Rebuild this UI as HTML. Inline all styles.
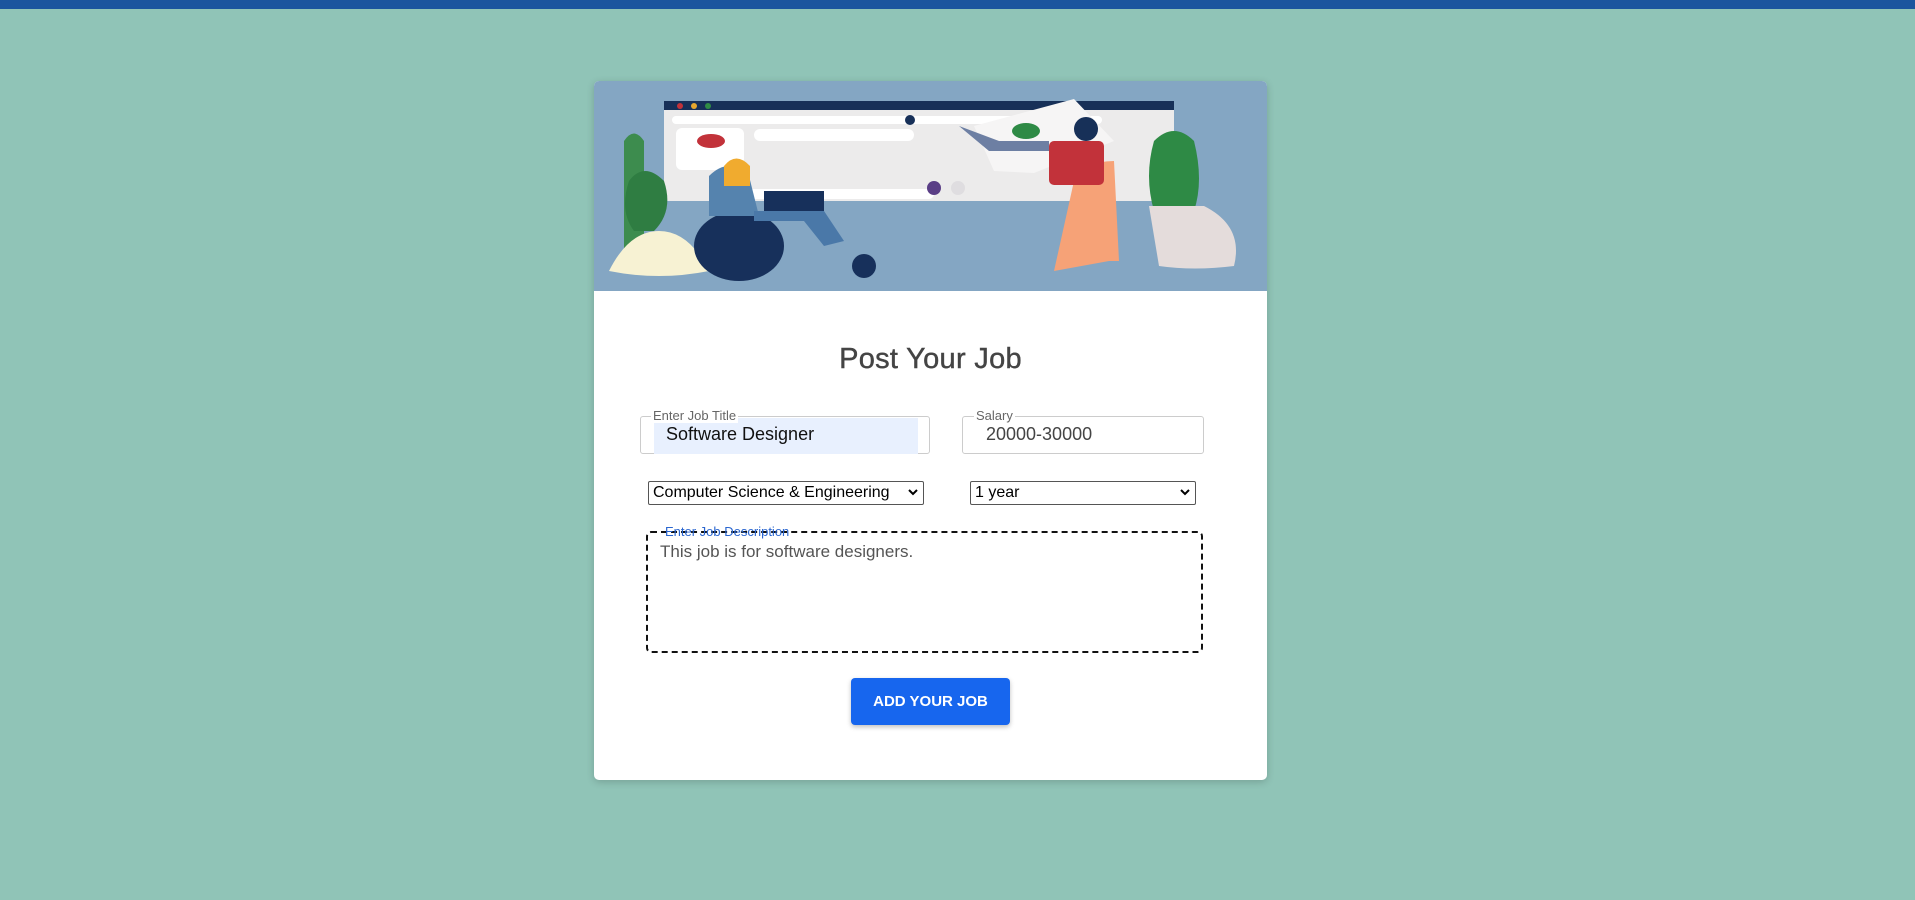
<!DOCTYPE html>
<html><head><meta charset="utf-8"><style>
*{box-sizing:border-box}
body{margin:0;width:1915px;height:900px;background:#90c4b7;font-family:"Liberation Sans",Roboto,sans-serif;position:relative;overflow:hidden}
.bar{position:absolute;left:0;top:0;width:1915px;height:9px;background:#1b559e}
.card{position:absolute;left:594px;top:81px;width:673px;height:699px;background:#fff;border-radius:5px;box-shadow:0 2px 8px rgba(0,0,0,.18);overflow:hidden}
.abs{position:absolute}
h1{position:absolute;left:0;width:100%;top:261px;margin:0;text-align:center;font-size:29px;line-height:34px;font-weight:normal;color:#444;letter-spacing:.3px;-webkit-text-stroke:.4px #444}
.fs{position:absolute;border:1px solid #ccc;border-radius:3px}
.lbl{position:absolute;font-size:13px;color:#666;background:#fff;padding:0 2px}
.sel{position:absolute;border:1px solid #555;border-radius:2px;font-size:16px;color:#000;padding:1px 4px;height:24px;line-height:20px;background:#fff}
.chev{position:absolute;right:5px;top:6px}
</style></head><body>
<div class="bar"></div>
<div class="card">
<svg class="abs" style="left:0;top:0" width="673" height="210" viewBox="0 0 673 210">
<rect width="673" height="210" fill="#84a6c3"/>
<rect x="70" y="20" width="510" height="100" rx="4" fill="#ecebeb"/>
<rect x="70" y="20" width="510" height="9" fill="#173058"/>
<circle cx="86" cy="25" r="3" fill="#c2323a"/><circle cx="100" cy="25" r="3" fill="#e6a72e"/><circle cx="114" cy="25" r="3" fill="#2f8c45"/>
<rect x="78" y="35" width="430" height="8" rx="4" fill="#fff"/>
<circle cx="316" cy="39" r="5" fill="#173058"/>
<rect x="82" y="47" width="68" height="42" rx="6" fill="#fff"/>
<ellipse cx="117" cy="60" rx="14" ry="7" fill="#c2323a"/>
<rect x="160" y="48" width="160" height="12" rx="6" fill="#fff"/>
<polygon points="380,45 480,18 520,60 440,92 400,90" fill="#f6f5f5"/>
<ellipse cx="432" cy="50" rx="14" ry="8" fill="#2e8a45"/>
<rect x="120" y="108" width="220" height="10" rx="5" fill="#fff"/>
<circle cx="340" cy="107" r="7" fill="#5a3e86"/>
<circle cx="364" cy="107" r="7" fill="#dfdde0"/>
<path d="M30 60 q10-15 20 0 v130 h-20z" fill="#3d8c4e"/>
<path d="M35 100 q15-20 35 0 q10 30 -10 50 h-20 q-15-20-5-50z" fill="#2f7d42"/>
<path d="M15 190 q20-40 50-40 q30 0 50 40 q-50 10-100 0z" fill="#f7f2d3"/>
<path d="M460 190 l20-90 q10-20 40-20 l5 100 h-10z" fill="#f6a277"/>
<rect x="455" y="60" width="55" height="44" rx="5" fill="#c2323a"/>
<circle cx="492" cy="48" r="12" fill="#173058"/>
<path d="M365 45 l40 15 h50 v10 h-60z" fill="#6d7fa3"/>
<path d="M560 60 q20-20 40 0 q10 40 0 70 q-20 10-40 0 q-10-35 0-70z" fill="#2e8a45"/>
<path d="M555 125 h55 q40 20 30 60 q-40 5-75 0z" fill="#e4dcdb"/>
<ellipse cx="145" cy="165" rx="45" ry="35" fill="#17305b"/>
<path d="M115 95 q20-20 40 0 l10 40 h-50z" fill="#5583ae"/>
<path d="M130 85 q12-15 26 0 v20 h-26z" fill="#f0ab2f"/>
<rect x="170" y="110" width="60" height="20" fill="#17305b"/>
<path d="M160 130 h70 l20 30 l-20 5 l-20-25 h-50z" fill="#4a78a8"/>
<circle cx="270" cy="185" r="12" fill="#17305b"/>
</svg>
<h1>Post Your Job</h1>
<div class="fs" style="left:46px;top:335px;width:290px;height:38px"></div>
<div class="abs" style="left:60px;top:337px;width:264px;height:36px;background:#e8f0fe"></div>
<div class="lbl" style="left:57px;top:327px">Enter Job Title</div>
<div class="abs" style="left:72px;top:343px;font-size:18px;color:#111">Software Designer</div>
<div class="fs" style="left:368px;top:335px;width:242px;height:38px"></div>
<div class="lbl" style="left:380px;top:327px">Salary</div>
<div class="abs" style="left:392px;top:343px;font-size:18px;color:#444">20000-30000</div>
<div class="sel" style="left:54px;top:400px;width:276px">Computer Science &amp; Engineering<svg class="chev" width="10" height="8"><path d="M1 2 l4 4 4-4" stroke="#000" stroke-width="2" fill="none"/></svg></div>
<div class="sel" style="left:376px;top:400px;width:226px">1 year<svg class="chev" width="10" height="8"><path d="M1 2 l4 4 4-4" stroke="#000" stroke-width="2" fill="none"/></svg></div>
<div class="abs" style="left:52px;top:450px;width:557px;height:122px;border:2px dashed #111;border-radius:5px"></div>
<div class="abs" style="left:71px;top:443px;font-size:13px;color:#2a66d0">Enter Job Description</div>
<div class="abs" style="left:66px;top:461px;font-size:17px;color:#555">This job is for software designers.</div>
<div class="abs" style="left:257px;top:597px;width:159px;height:47px;background:#1766ee;border-radius:4px;box-shadow:0 2px 5px rgba(0,0,0,.25);color:#fff;font-weight:bold;font-size:15px;text-align:center;line-height:47px">ADD YOUR JOB</div>
</div>
</body></html>
